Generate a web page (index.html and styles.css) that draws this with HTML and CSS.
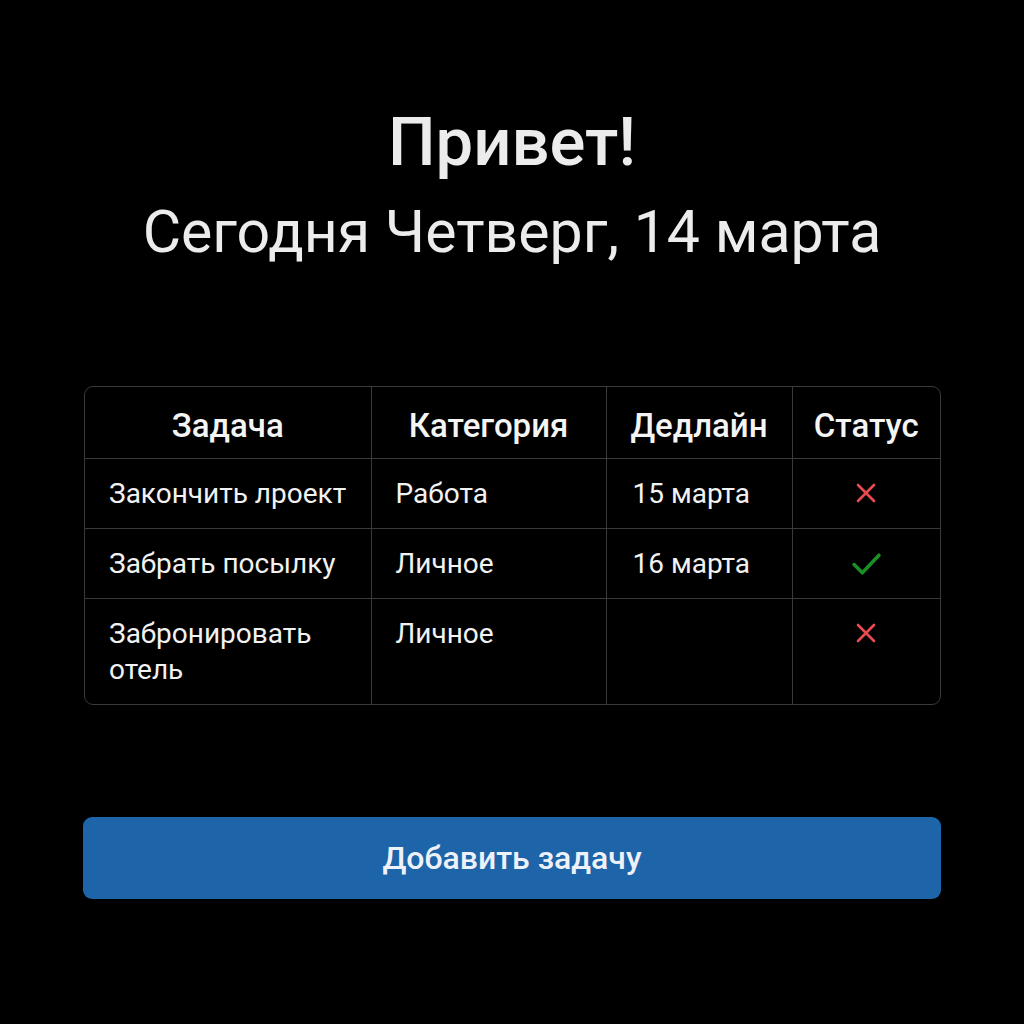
FILE: index.html
```html
<!DOCTYPE html>
<html lang="ru">
<head>
<meta charset="utf-8">
<link rel="stylesheet" href="styles.css">
</head>
<body>
<main class="page">
  <header class="hero">
    <h1 class="title">Привет!</h1>
    <p class="subtitle">Сегодня Четверг, 14 марта</p>
  </header>
  <div class="table-wrap">
    <table class="tasks">
      <colgroup>
        <col class="c1"><col class="c2"><col class="c3"><col class="c4">
      </colgroup>
      <thead>
        <tr><th>Задача</th><th>Категория</th><th>Дедлайн</th><th>Статус</th></tr>
      </thead>
      <tbody>
        <tr>
          <td>Закончить лроект</td><td>Работа</td><td class="date">15 марта</td>
          <td class="status"><svg class="icon" viewBox="0 0 24 24"><path d="M4 4 L20 20 M20 4 L4 20" stroke="#e84c4f" stroke-width="2.6" fill="none" stroke-linecap="round"/></svg></td>
        </tr>
        <tr>
          <td>Забрать посылку</td><td>Личное</td><td class="date">16 марта</td>
          <td class="status"><svg class="icon check" viewBox="0 0 28 24"><path d="M2 13 L10 21 L26 4" stroke="#1a8f24" stroke-width="3.4" fill="none" stroke-linecap="round" stroke-linejoin="round"/></svg></td>
        </tr>
        <tr class="tall">
          <td>Забронировать<br>отель</td><td>Личное</td><td class="date"></td>
          <td class="status"><svg class="icon" viewBox="0 0 24 24"><path d="M4 4 L20 20 M20 4 L4 20" stroke="#e84c4f" stroke-width="2.6" fill="none" stroke-linecap="round"/></svg></td>
        </tr>
      </tbody>
    </table>
  </div>
  <button class="add-btn">Добавить задачу</button>
</main>
</body>
</html>
```
FILE: styles.css
```css
html, body {
  margin: 0;
  padding: 0;
  background: #000;
}
body {
  font-family: Roboto, "Noto Sans", sans-serif;
  color: #f2f2f2;
}
.page {
  width: 1024px;
  height: 1024px;
  display: flex;
  flex-direction: column;
  align-items: center;
}
.hero {
  text-align: center;
  padding-top: 100px;
}
.title {
  margin: 0;
  font-size: 67px;
  font-weight: 500;
  line-height: 84px;
  color: #ececec;
}
.subtitle {
  margin: 12px 0 0;
  font-size: 59px;
  font-weight: 400;
  line-height: 72px;
  color: #ececec;
}
.table-wrap {
  margin-top: 118px;
  width: 855px;
  margin-left: 1px;
  border: 1px solid #3a3a3a;
  border-radius: 9px;
  overflow: hidden;
}
.tasks {
  width: 100%;
  border-collapse: collapse;
  table-layout: fixed;
}
.c1 { width: 286px; }
.c2 { width: 235px; }
.c3 { width: 186px; }
.c4 { width: auto; }
.tasks th, .tasks td {
  border: 1px solid #3a3a3a;
}
.tasks tr:first-child th { border-top: none; }
.tasks tr:last-child td { border-bottom: none; }
.tasks th:first-child, .tasks td:first-child { border-left: none; }
.tasks th:last-child, .tasks td:last-child { border-right: none; }
.tasks th {
  height: 71px;
  padding: 6px 0 0;
  box-sizing: border-box;
  font-size: 33px;
  font-weight: 500;
  text-align: center;
  color: #f4f4f4;
}
.tasks td {
  padding: 17px 0 16px 24px;
  font-size: 28px;
  line-height: 36px;
  vertical-align: top;
  color: #f2f2f2;
}
.tasks td.date { padding-left: 26px; }
.tasks td.status {
  padding-left: 0;
  text-align: center;
}
.icon {
  width: 24px;
  height: 24px;
  vertical-align: middle;
  margin-top: -4px;
}
.icon.check {
  width: 29px;
  height: 25px;
}
.add-btn {
  margin-top: 112px;
  width: 858px;
  height: 82px;
  border: none;
  border-radius: 9px;
  background: #1d64a9;
  color: #eef2f8;
  font-family: Roboto, "Noto Sans", sans-serif;
  font-size: 32px;
  font-weight: 500;
  cursor: pointer;
}
```
